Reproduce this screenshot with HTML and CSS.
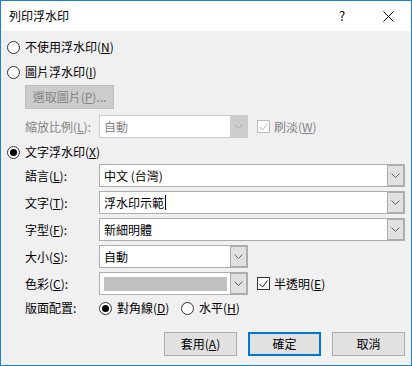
FILE: index.html
```html
<!DOCTYPE html>
<html lang="zh-Hant">
<head>
    <meta charset="UTF-8">
    <title>列印浮水印</title>
    <link rel="stylesheet" href="styles.css">
</head>
<body>
    <div class="window">
        <div class="titlebar">
            <span class="title">列印浮水印</span>
            <span class="caption-btn help">?</span>
            <span class="caption-btn close">
                <svg width="11" height="11" viewBox="0 0 11 11"><path d="M0.5 0.5L10.5 10.5M10.5 0.5L0.5 10.5" stroke="#000" stroke-width="1" fill="none"/></svg>
            </span>
        </div>

        <div class="content">
            <div class="radio-row first">
                <span class="radio"></span>
                <span>不使用浮水印(<u>N</u>)</span>
            </div>
            <div class="radio-row second">
                <span class="radio"></span>
                <span>圖片浮水印(<u>I</u>)</span>
            </div>

            <div class="pick-btn">選取圖片(<u>P</u>)...</div>

            <div class="form-row scale-row">
                <span class="field-label disabled-text">縮放比例(<u>L</u>):</span>
                <div class="combo short disabled">
                    <span class="combo-text">自動</span>
                    <span class="combo-arrow">
                        <svg width="9" height="5" viewBox="0 0 9 5"><path d="M0.5 0.5L4.5 4.5L8.5 0.5" stroke="#a8a8a8" fill="none"/></svg>
                    </span>
                </div>
                <span class="checkbox disabled">
                    <svg width="9" height="8" viewBox="0 0 9 8"><path d="M0.5 4L3.5 7L8.5 0.5" stroke="#bcbcbc" fill="none"/></svg>
                </span>
                <span class="disabled-text">刷淡(<u>W</u>)</span>
            </div>

            <div class="radio-row third">
                <span class="radio checked"></span>
                <span>文字浮水印(<u>X</u>)</span>
            </div>

            <div class="fields">
                <div class="form-row">
                    <span class="field-label">語言(<u>L</u>):</span>
                    <div class="combo">
                        <span class="combo-text">中文 (台灣)</span>
                        <span class="combo-arrow">
                            <svg width="9" height="5" viewBox="0 0 9 5"><path d="M0.5 0.5L4.5 4.5L8.5 0.5" stroke="#606060" fill="none"/></svg>
                        </span>
                    </div>
                </div>
                <div class="form-row">
                    <span class="field-label">文字(<u>T</u>):</span>
                    <div class="combo">
                        <span class="combo-text">浮水印示範<span class="caret"></span></span>
                        <span class="combo-arrow">
                            <svg width="9" height="5" viewBox="0 0 9 5"><path d="M0.5 0.5L4.5 4.5L8.5 0.5" stroke="#606060" fill="none"/></svg>
                        </span>
                    </div>
                </div>
                <div class="form-row">
                    <span class="field-label">字型(<u>F</u>):</span>
                    <div class="combo">
                        <span class="combo-text">新細明體</span>
                        <span class="combo-arrow">
                            <svg width="9" height="5" viewBox="0 0 9 5"><path d="M0.5 0.5L4.5 4.5L8.5 0.5" stroke="#606060" fill="none"/></svg>
                        </span>
                    </div>
                </div>
                <div class="form-row">
                    <span class="field-label">大小(<u>S</u>):</span>
                    <div class="combo short">
                        <span class="combo-text">自動</span>
                        <span class="combo-arrow">
                            <svg width="9" height="5" viewBox="0 0 9 5"><path d="M0.5 0.5L4.5 4.5L8.5 0.5" stroke="#606060" fill="none"/></svg>
                        </span>
                    </div>
                </div>
                <div class="form-row">
                    <span class="field-label">色彩(<u>C</u>):</span>
                    <div class="combo short">
                        <span class="combo-text"><span class="swatch"></span></span>
                        <span class="combo-arrow">
                            <svg width="9" height="5" viewBox="0 0 9 5"><path d="M0.5 0.5L4.5 4.5L8.5 0.5" stroke="#606060" fill="none"/></svg>
                        </span>
                    </div>
                    <span class="checkbox">
                        <svg width="9" height="8" viewBox="0 0 9 8"><path d="M0.5 4L3.5 7L8.5 0.5" stroke="#222" fill="none"/></svg>
                    </span>
                    <span>半透明(<u>E</u>)</span>
                </div>
            </div>

            <div class="form-row layout-row">
                <span class="field-label">版面配置:</span>
                <span class="option">
                    <span class="radio checked"></span>
                    <span>對角線(<u>D</u>)</span>
                </span>
                <span class="option">
                    <span class="radio"></span>
                    <span>水平(<u>H</u>)</span>
                </span>
            </div>

            <div class="actions">
                <span class="btn">套用(<u>A</u>)</span>
                <span class="btn primary">確定</span>
                <span class="btn">取消</span>
            </div>
        </div>
    </div>
</body>
</html>
```

FILE: styles.css
```css
* {
    box-sizing: border-box;
    margin: 0;
    padding: 0;
}

body {
    background: #fff;
    font-family: "Noto Sans CJK TC", "Liberation Sans", sans-serif;
    font-size: 12px;
    line-height: 18px;
    color: #000;
}

u {
    text-decoration: underline;
    text-underline-offset: 1px;
}

.window {
    width: 412px;
    height: 366px;
    border: 1px solid #1883d7;
    background: #f0f0f0;
}

/* title bar */
.titlebar {
    height: 30px;
    background: #fff;
    display: flex;
    align-items: center;
}

.title {
    flex: 1;
    padding-left: 8px;
}

.caption-btn {
    width: 46px;
    height: 30px;
    display: flex;
    align-items: center;
    justify-content: center;
}

.help {
    font-size: 13px;
}

/* dialog body */
.content {
    padding: 0 6px;
}

.radio-row {
    display: flex;
    align-items: center;
    height: 18px;
}

.radio-row.first {
    margin-top: 7px;
}

.radio-row.second {
    margin-top: 7px;
}

.radio-row.third {
    margin-top: 5px;
}

.radio {
    width: 13px;
    height: 13px;
    border: 1px solid #333;
    border-radius: 50%;
    background: #fff;
    margin-right: 5px;
    position: relative;
    flex-shrink: 0;
}

.radio.checked::after {
    content: "";
    position: absolute;
    left: 2px;
    top: 2px;
    width: 7px;
    height: 7px;
    border-radius: 50%;
    background: #000;
}

.pick-btn {
    margin: 4px 0 0 18px;
    width: 89px;
    height: 24px;
    background: #cccccc;
    border: 1px solid #bfbfbf;
    color: #838383;
    display: flex;
    align-items: center;
    justify-content: center;
}

.form-row {
    display: flex;
    align-items: center;
    padding-left: 18px;
}

.scale-row {
    margin-top: 6px;
}

.field-label {
    width: 74px;
    flex-shrink: 0;
}

.disabled-text {
    color: #838383;
}

.fields {
    margin-top: 3px;
    display: flex;
    flex-direction: column;
    gap: 4px;
}

/* combo boxes */
.combo {
    flex: 1;
    height: 23px;
    display: flex;
    border: 1px solid #adadad;
    background: #fff;
}

.combo.short {
    flex: none;
    width: 149px;
}

.combo-text {
    flex: 1;
    display: flex;
    align-items: center;
    padding-left: 4px;
}

.combo-arrow {
    width: 17px;
    background: #e1e1e1;
    border: 1px solid #adadad;
    display: flex;
    align-items: center;
    justify-content: center;
}

.combo.disabled {
    border-color: #cccccc;
    color: #838383;
}

.combo.disabled .combo-arrow {
    background: #cccccc;
    border-color: #cccccc;
}

.caret {
    display: inline-block;
    width: 1px;
    height: 15px;
    background: #000;
    margin-left: 1px;
}

.swatch {
    width: 123px;
    height: 14px;
    background: #c0c0c0;
}

.checkbox {
    width: 13px;
    height: 13px;
    border: 1px solid #333;
    background: #fff;
    margin: 0 4px 0 9px;
    display: flex;
    align-items: center;
    justify-content: center;
}

.checkbox.disabled {
    border-color: #bcbcbc;
}

.layout-row {
    margin-top: 4px;
    height: 18px;
}

.option {
    width: 82px;
    display: flex;
    align-items: center;
}

/* buttons */
.actions {
    margin-top: 15px;
    display: flex;
    justify-content: flex-end;
    gap: 11px;
}

.btn {
    width: 73px;
    height: 24px;
    background: #e1e1e1;
    border: 1px solid #adadad;
    display: flex;
    align-items: center;
    justify-content: center;
}

.btn.primary {
    border: 2px solid #0078d7;
}
```
